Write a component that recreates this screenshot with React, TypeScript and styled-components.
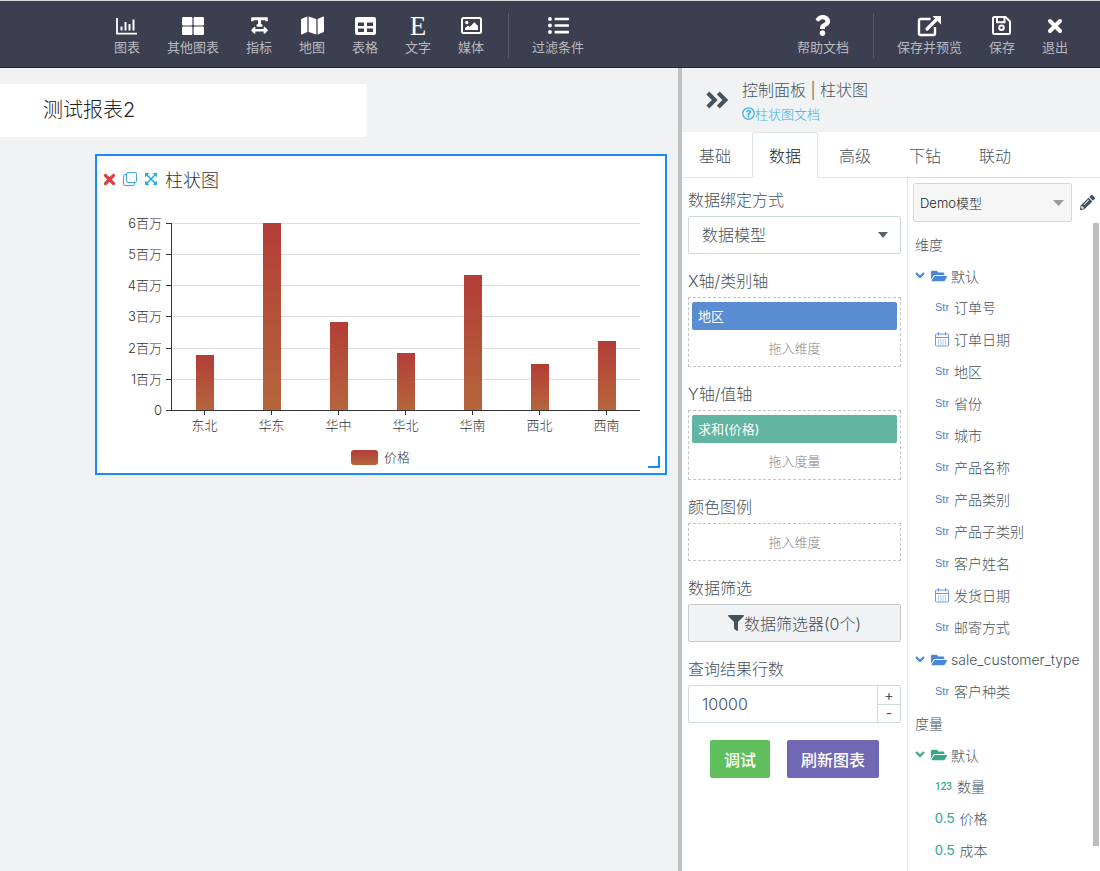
import React from "react";
import styled, { createGlobalStyle } from "styled-components";
import {
  FaTextWidth,
  FaMap,
  FaListUl,
  FaQuestion,
  FaRegQuestionCircle,
  FaFilter,
  FaPencilAlt,
  FaFolderOpen,
} from "react-icons/fa";

const GlobalStyle = createGlobalStyle`
  * { box-sizing: border-box; }
  body {
    margin: 0;
    background: #f0f2f4;
    color: #46525b;
    font-family: Inter, "Noto Sans CJK SC", sans-serif;
    font-weight: 300;
    font-size: 16px;
  }
  button, input, select { font: inherit; color: inherit; }
  button { cursor: pointer; }
`;

const blue = "#4a86d8";
const green = "#35a98a";

const Page = styled.div`
  display: flex;
  flex-direction: column;
  min-height: 100vh;
`;

/* ---------- top toolbar ---------- */

const Toolbar = styled.header`
  display: flex;
  justify-content: space-between;
  height: 68px;
  padding: 3px 18px 0 101px;
  background: #3c3f50;
  border-top: 1px solid #d5d7da;
  border-bottom: 1px solid #1f2540;
`;

const ToolGroup = styled.nav`
  display: flex;
  align-items: center;
`;

const ToolButton = styled.button`
  display: flex;
  flex-direction: column;
  align-items: center;
  padding: 0 14px 0 13px;
  border: 0;
  background: none;
  color: #b9babf;
  font-size: 13px;
  font-weight: 400;
  line-height: 20px;
  white-space: nowrap;
`;

const ToolIcon = styled.span`
  display: flex;
  align-items: center;
  justify-content: center;
  height: 22px;
  color: #fff;
  svg { display: block; }
`;

const SerifLetter = styled.span`
  font-family: "Liberation Serif", serif;
  font-size: 27px;
  line-height: 22px;
`;

const ToolDivider = styled.span`
  width: 1px;
  height: 45px;
  margin: 0 10px;
  background: #5a5c66;
`;

const BarsIcon = () => (
  <svg width="22" height="18" viewBox="0 0 22 18" fill="none" stroke="currentColor">
    <path d="M1 1v15.6h20" strokeWidth="1.8" />
    <path d="M5.500 13.500v-4M9.500 13.500V5M13.500 13.500V7M17.500 13.500V2.500" strokeWidth="2" />
  </svg>
);
const GridIcon = () => (
  <svg width="22" height="18" viewBox="0 0 22 18" fill="currentColor">
    <rect width="10.400" height="8.500" rx="1.200" />
    <rect x="11.600" width="10.400" height="8.500" rx="1.200" />
    <rect y="9.500" width="10.400" height="8.500" rx="1.200" />
    <rect x="11.600" y="9.500" width="10.400" height="8.500" rx="1.200" />
  </svg>
);
const TableIcon = () => (
  <svg width="21" height="18" viewBox="0 0 21 18" fill="currentColor" fillRule="evenodd">
    <path d="M2 0h17a2 2 0 0 1 2 2v14a2 2 0 0 1-2 2H2a2 2 0 0 1-2-2V2a2 2 0 0 1 2-2zM3 5.500v3.500h6V5.500zM12 5.500v3.500h6V5.500zM3 11.500V15h6v-3.500zM12 11.500V15h6v-3.500z" />
  </svg>
);
const PictureIcon = () => (
  <svg width="21" height="17" viewBox="0 0 21 17">
    <rect x="1" y="1" width="19" height="15" rx="1.500" fill="none" stroke="currentColor" strokeWidth="2" />
    <circle cx="5.800" cy="5.500" r="1.700" fill="currentColor" />
    <path d="M4 13v-2l3-2.500 1.800 1.500 4.500-4.700L17 9v4z" fill="currentColor" />
  </svg>
);
const ShareIcon = () => (
  <svg width="24" height="22" viewBox="0 0 24 22" fill="none" stroke="currentColor">
    <path d="M13.500 4H3.500A1.500 1.500 0 0 0 2 5.500v13A1.500 1.500 0 0 0 3.500 20h13a1.500 1.500 0 0 0 1.500-1.500V12" strokeWidth="2.400" />
    <path d="M10 14L20 4" strokeWidth="3.200" strokeLinecap="round" />
    <path d="M15.500 1H24v8.500z" fill="currentColor" stroke="none" />
  </svg>
);
const DiskIcon = () => (
  <svg width="19" height="19" viewBox="0 0 19 19" fill="none" stroke="currentColor" strokeWidth="2">
    <path d="M2.500 1H13.500L18 5.500V16.500A1.500 1.500 0 0 1 16.500 18H2.500A1.500 1.500 0 0 1 1 16.500V2.500A1.500 1.500 0 0 1 2.500 1z" />
    <path d="M5 1.500V6.200H12.500V1.500" />
    <circle cx="9.500" cy="11.800" r="2.300" />
  </svg>
);
const CloseIcon = ({ size }: { size: number }) => (
  <svg width={size} height={size} viewBox="0 0 16 16" fill="none" stroke="currentColor" strokeWidth="4" strokeLinecap="round">
    <path d="M3 3l10 10M13 3L3 13" />
  </svg>
);

/* ---------- report canvas ---------- */

const Main = styled.div`
  display: flex;
  flex: 1;
`;

const Canvas = styled.main`
  flex: 1;
  min-width: 0;
  padding-top: 16px;
`;

const TitleCard = styled.h1`
  width: 367px;
  margin: 0 0 17px;
  padding: 0 43px;
  background: #fff;
  border-radius: 0 3px 3px 0;
  color: #222;
  font-size: 20px;
  font-weight: 300;
  line-height: 53px;
`;

const ChartCard = styled.section`
  position: relative;
  width: 572px;
  margin-left: 95px;
  border: 2px solid #1a8af8;
  background: #fff;
`;

const ChartHeader = styled.div`
  display: flex;
  align-items: center;
  gap: 7px;
  height: 46px;
  margin-bottom: 2px;
  padding-left: 5px;
`;

const ChartTitle = styled.h2`
  margin: 0;
  color: #333;
  font-size: 18px;
  font-weight: 300;
`;

const IconButton = styled.button<{ $color: string }>`
  display: flex;
  align-items: center;
  justify-content: center;
  width: 14px;
  height: 16px;
  padding: 0;
  border: 0;
  background: none;
  color: ${(p) => p.$color};
  svg { flex: none; }
`;

const Plot = styled.svg`
  display: block;
  width: 100%;
  height: auto;
  font-size: 13px;
  fill: #333;
`;

const ResizeHandle = styled.span`
  position: absolute;
  right: 5px;
  bottom: 5px;
  width: 12px;
  height: 12px;
  border: solid #1a8af8;
  border-width: 0 2px 2px 0;
`;

const series = [
  { name: "东北", height: 55 },
  { name: "华东", height: 187 },
  { name: "华中", height: 88 },
  { name: "华北", height: 57 },
  { name: "华南", height: 135 },
  { name: "西北", height: 46 },
  { name: "西南", height: 69 },
];
const levels = ["0", "1百万", "2百万", "3百万", "4百万", "5百万", "6百万"];

const BarChart = () => (
  <Plot viewBox="0 0 568 269" role="img" aria-label="柱状图">
    <defs>
      <linearGradient id="bar" x1="0" y1="0" x2="0" y2="1">
        <stop offset="0" stopColor="#b33d37" />
        <stop offset="1" stopColor="#b5663c" />
      </linearGradient>
    </defs>
    {levels.map((label, i) => {
      const y = Math.round(206 - i * 31.2) + 0.5;
      return (
        <g key={label}>
          {i > 0 && <path d={`M75 ${y}H543`} stroke="#dcdcdc" />}
          <path d={`M69 ${y}h6`} stroke="#333" />
          <text x="65" y={y + 4} textAnchor="end">{label}</text>
        </g>
      );
    })}
    {series.map((s, i) => (
      <g key={s.name}>
        <rect x={99 + i * 67} y={206 - s.height} width="18" height={s.height} fill="url(#bar)" />
        <path d={`M${107.5 + i * 67} 207v4`} stroke="#333" />
        <text x={107.5 + i * 67} y="226" textAnchor="middle">{s.name}</text>
      </g>
    ))}
    <path d="M74.500 19V206.500H543" fill="none" stroke="#333" />
    <rect x="254" y="246" width="27" height="15" rx="3" fill="url(#bar)" />
    <text x="287" y="258">价格</text>
  </Plot>
);

/* ---------- control panel ---------- */

const Panel = styled.aside`
  display: flex;
  flex-direction: column;
  width: 422px;
  border-left: 4px solid #bfc0c2;
  background: #fff;
`;

const PanelHeader = styled.div`
  display: flex;
  align-items: center;
  gap: 14px;
  height: 64px;
  padding-left: 24px;
  background: #f0f2f4;
`;

const PanelTitle = styled.h2`
  margin: 0;
  font-size: 16px;
  font-weight: 300;
  line-height: 24px;
`;

const DocLink = styled.a`
  display: flex;
  align-items: center;
  color: #38aee6;
  font-size: 13px;
  line-height: 24px;
  text-decoration: none;
`;

const PanelHeading = styled.div`
  padding-top: 3px;
`;

const CollapseButton = styled.button`
  display: flex;
  padding: 0;
  border: 0;
  background: none;
`;

const Tabs = styled.nav`
  display: flex;
  gap: 4px;
  height: 46px;
  border-bottom: 1px solid #dee3e6;
`;

const Tab = styled.button<{ $active?: boolean }>`
  height: 46px;
  padding: 0 16px;
  border: 1px solid ${(p) => (p.$active ? "#dee3e6" : "transparent")};
  border-bottom-color: ${(p) => (p.$active ? "#fff" : "transparent")};
  border-radius: 3px 3px 0 0;
  background: none;
  color: ${(p) => (p.$active ? "#222" : "inherit")};
`;

const PanelBody = styled.div`
  display: flex;
  flex: 1;
`;

const Form = styled.form`
  display: flex;
  flex-direction: column;
  gap: 15px;
  width: 226px;
  padding: 10px 6px 0;
  border-right: 1px solid #e2e6e9;
`;

const Field = styled.div`
  display: flex;
  flex-direction: column;
  gap: 4px;
`;

const FieldLabel = styled.label`
  line-height: 24px;
`;

const SelectBox = styled.div<{ $muted?: boolean }>`
  position: relative;
  flex: 1;
  select {
    display: block;
    width: 100%;
    height: ${(p) => (p.$muted ? 39 : 38)}px;
    padding: 0 ${(p) => (p.$muted ? 6 : 13)}px;
    border: 1px solid #cfdadd;
    border-radius: 2px;
    background: ${(p) => (p.$muted ? "#f6f6f6" : "#fff")};
    color: ${(p) => (p.$muted ? "#222" : "inherit")};
    font-size: ${(p) => (p.$muted ? 13 : 16)}px;
    appearance: none;
  }
  svg {
    position: absolute;
    top: 50%;
    right: ${(p) => (p.$muted ? 8 : 13)}px;
    margin-top: -3px;
    color: ${(p) => (p.$muted ? "#999" : "#56626b")};
    pointer-events: none;
  }
`;

const Caret = ({ width }: { width: number }) => (
  <svg width={width} height="6" viewBox="0 0 10 6" preserveAspectRatio="none" fill="currentColor">
    <path d="M0 0h10L5 6z" />
  </svg>
);

const DropZone = styled.div`
  padding: 0 3px;
  border: 1px dashed #c4c4c4;
`;

const Pill = styled.div<{ $color: string }>`
  margin-top: 4px;
  padding: 0 6px;
  border-radius: 2px;
  background: ${(p) => p.$color};
  color: #fff;
  font-size: 13px;
  font-weight: 400;
  line-height: 28px;
`;

const Hint = styled.div`
  color: #858585;
  font-size: 13px;
  line-height: 36px;
  text-align: center;
`;

const FilterButton = styled.button`
  display: flex;
  align-items: center;
  justify-content: center;
  height: 38px;
  border: 1px solid #c6cacc;
  border-radius: 2px;
  background: #f0f2f4;
`;

const Stepper = styled.div`
  display: flex;
  height: 38px;
  border: 1px solid #cfdadd;
  border-radius: 2px;
  input {
    flex: 1;
    min-width: 0;
    padding: 0 13px;
    border: 0;
    background: none;
  }
`;

const StepButtons = styled.div`
  display: flex;
  flex-direction: column;
  width: 23px;
  border-left: 1px solid #cfdadd;
  button {
    flex: 1;
    padding: 0;
    border: 0;
    background: none;
    font-size: 14px;
    font-weight: 400;
    line-height: 16px;
  }
  button + button { border-top: 1px solid #cfdadd; }
`;

const Actions = styled.div`
  display: flex;
  justify-content: center;
  gap: 17px;
  padding-top: 2px;
`;

const ActionButton = styled.button<{ $color: string }>`
  height: 38px;
  padding: 0 14px;
  border: 0;
  border-radius: 2px;
  background: ${(p) => p.$color};
  color: #fff;
  font-weight: 500;
`;

/* ---------- model fields ---------- */

const ModelColumn = styled.div`
  display: flex;
  flex: 1;
  flex-direction: column;
  min-width: 0;
`;

const ModelBar = styled.div`
  display: flex;
  align-items: center;
  gap: 8px;
  padding: 5px 5px 0 5px;
`;

const ListArea = styled.div`
  display: flex;
  flex: 1;
  justify-content: space-between;
  padding-right: 1px;
`;

const FieldTree = styled.div`
  padding: 7px 0 0 7px;
  font-size: 14px;
  white-space: nowrap;
`;

const TreeGroup = styled.section`
  margin-bottom: 1px;
`;

const TreeHeading = styled.h3`
  margin: 0;
  font-size: 14px;
  font-weight: 300;
  line-height: 31px;
`;

const FolderRow = styled.div<{ $color: string }>`
  display: flex;
  align-items: center;
  height: 31px;
  svg { color: ${(p) => p.$color}; }
  svg + svg { margin: 0 4px 0 6px; }
`;

const FieldRow = styled.div`
  display: flex;
  align-items: center;
  gap: 5px;
  height: 32px;
  padding-left: 20px;
`;

const tagSizes: Record<string, number> = { str: 11, date: 11, int: 10, float: 14 };

const TypeTag = styled.span<{ $kind: string }>`
  display: flex;
  color: ${(p) => (p.$kind === "str" || p.$kind === "date" ? blue : green)};
  font-family: ${(p) => (p.$kind === "int" ? "Roboto" : '"Liberation Sans"')}, sans-serif;
  font-size: ${(p) => tagSizes[p.$kind]}px;
  font-weight: ${(p) => (p.$kind === "int" ? 500 : 400)};
`;

const ScrollThumb = styled.div`
  width: 6px;
  height: 96%;
  margin-top: 1px;
  background: #bdbdbd;
`;

const CalendarIcon = () => (
  <svg width="14" height="15" viewBox="0 0 14 15" fill="none" stroke="#6f96dc">
    <rect x=".5" y="2" width="13" height="12" rx="1" />
    <path d="M.5 5.500h13M3.500 0v3.500M10.500 0v3.500" />
    <path d="M3 8h8.500M3 10h8.500M3 12h8.500" strokeDasharray="1 1.300" />
  </svg>
);

const Folder = ({ name, color }: { name: string; color: string }) => (
  <FolderRow $color={color}>
    <svg width="10" height="7" viewBox="0 0 10 7" fill="none" stroke="currentColor" strokeWidth="2.200">
      <path d="M1 1l4 4 4-4" />
    </svg>
    <FaFolderOpen size={16} />
    {name}
  </FolderRow>
);

type FieldItem = [kind: string, name: string];

const Fields = ({ items }: { items: FieldItem[] }) => (
  <>
    {items.map(([kind, name]) => (
      <FieldRow key={name}>
        <TypeTag $kind={kind}>
          {kind === "str" && "Str"}
          {kind === "date" && <CalendarIcon />}
          {kind === "int" && "123"}
          {kind === "float" && "0.5"}
        </TypeTag>
        {name}
      </FieldRow>
    ))}
  </>
);

const dimensions: FieldItem[] = [
  ["str", "订单号"],
  ["date", "订单日期"],
  ["str", "地区"],
  ["str", "省份"],
  ["str", "城市"],
  ["str", "产品名称"],
  ["str", "产品类别"],
  ["str", "产品子类别"],
  ["str", "客户姓名"],
  ["date", "发货日期"],
  ["str", "邮寄方式"],
];
const measures: FieldItem[] = [
  ["int", "数量"],
  ["float", "价格"],
  ["float", "成本"],
];

const Tool = ({ label, children }: { label: string; children: React.ReactNode }) => (
  <ToolButton type="button">
    <ToolIcon>{children}</ToolIcon>
    {label}
  </ToolButton>
);

export default function App() {
  return (
    <Page>
      <GlobalStyle />
      <Toolbar>
        <ToolGroup>
          <Tool label="图表"><BarsIcon /></Tool>
          <Tool label="其他图表"><GridIcon /></Tool>
          <Tool label="指标"><FaTextWidth size={19} /></Tool>
          <Tool label="地图"><FaMap size={23} /></Tool>
          <Tool label="表格"><TableIcon /></Tool>
          <Tool label="文字"><SerifLetter>E</SerifLetter></Tool>
          <Tool label="媒体"><PictureIcon /></Tool>
          <ToolDivider />
          <Tool label="过滤条件"><FaListUl size={21} /></Tool>
        </ToolGroup>
        <ToolGroup>
          <Tool label="帮助文档"><FaQuestion size={21} /></Tool>
          <ToolDivider />
          <Tool label="保存并预览"><ShareIcon /></Tool>
          <Tool label="保存"><DiskIcon /></Tool>
          <Tool label="退出"><CloseIcon size={16} /></Tool>
        </ToolGroup>
      </Toolbar>

      <Main>
        <Canvas>
          <TitleCard>测试报表2</TitleCard>
          <ChartCard>
            <ChartHeader>
              <IconButton type="button" aria-label="删除" $color="#d9413f"><CloseIcon size={13} /></IconButton>
              <IconButton type="button" aria-label="复制" $color="#3fa9e0">
                <svg width="14" height="14" viewBox="0 0 14 14" fill="none" stroke="currentColor">
                  <rect x="3.500" y=".5" width="10" height="10" rx="1.500" />
                  <path d="M3.500 2.500h-1.500a1.500 1.500 0 0 0-1.500 1.500v8a1.500 1.500 0 0 0 1.500 1.500h8a1.500 1.500 0 0 0 1.500-1.500v-1.500" />
                </svg>
              </IconButton>
              <IconButton type="button" aria-label="放大" $color="#1fa9e6">
                <svg width="12" height="12" viewBox="0 0 12 12" fill="currentColor">
                  <path d="M1.500 1.500l9 9M10.500 1.500l-9 9" stroke="currentColor" strokeWidth="1.500" />
                  <path d="M0 0h4.300L0 4.300zM12 0v4.300L7.700 0zM0 12V7.700L4.300 12zM12 12H7.700L12 7.700z" />
                </svg>
              </IconButton>
              <ChartTitle>柱状图</ChartTitle>
            </ChartHeader>
            <BarChart />
            <ResizeHandle />
          </ChartCard>
        </Canvas>

        <Panel>
          <PanelHeader>
            <CollapseButton type="button" aria-label="收起">
              <svg width="22" height="18" viewBox="0 0 22 18" fill="none" stroke="currentColor" strokeWidth="4">
                <path d="M1.800 2L8.800 9l-7 7M12.300 2l7 7-7 7" />
              </svg>
            </CollapseButton>
            <PanelHeading>
              <PanelTitle>控制面板 | 柱状图</PanelTitle>
              <DocLink href="#doc"><FaRegQuestionCircle size={13} />柱状图文档</DocLink>
            </PanelHeading>
          </PanelHeader>
          <Tabs>
            <Tab type="button">基础</Tab>
            <Tab type="button" $active>数据</Tab>
            <Tab type="button">高级</Tab>
            <Tab type="button">下钻</Tab>
            <Tab type="button">联动</Tab>
          </Tabs>
          <PanelBody>
            <Form>
              <Field>
                <FieldLabel htmlFor="binding">数据绑定方式</FieldLabel>
                <SelectBox>
                  <select id="binding"><option>数据模型</option></select>
                  <Caret width={10} />
                </SelectBox>
              </Field>
              <Field>
                <FieldLabel as="div">X轴/类别轴</FieldLabel>
                <DropZone>
                  <Pill $color="#5a8cd2">地区</Pill>
                  <Hint>拖入维度</Hint>
                </DropZone>
              </Field>
              <Field>
                <FieldLabel as="div">Y轴/值轴</FieldLabel>
                <DropZone>
                  <Pill $color="#62b5a1">求和(价格)</Pill>
                  <Hint>拖入度量</Hint>
                </DropZone>
              </Field>
              <Field>
                <FieldLabel as="div">颜色图例</FieldLabel>
                <DropZone><Hint>拖入维度</Hint></DropZone>
              </Field>
              <Field>
                <FieldLabel as="div">数据筛选</FieldLabel>
                <FilterButton type="button"><FaFilter size={16} />数据筛选器(0个)</FilterButton>
              </Field>
              <Field>
                <FieldLabel htmlFor="rows">查询结果行数</FieldLabel>
                <Stepper>
                  <input id="rows" type="text" defaultValue="10000" />
                  <StepButtons>
                    <button type="button">+</button>
                    <button type="button">-</button>
                  </StepButtons>
                </Stepper>
              </Field>
              <Actions>
                <ActionButton type="button" $color="#5fbf5c">调试</ActionButton>
                <ActionButton type="button" $color="#7067b5">刷新图表</ActionButton>
              </Actions>
            </Form>
            <ModelColumn>
              <ModelBar>
                <SelectBox $muted>
                  <select aria-label="模型"><option>Demo模型</option></select>
                  <Caret width={11} />
                </SelectBox>
                <FaPencilAlt size={15} />
              </ModelBar>
              <ListArea>
                <FieldTree>
                  <TreeHeading>维度</TreeHeading>
                  <TreeGroup>
                    <Folder name="默认" color={blue} />
                    <Fields items={dimensions} />
                  </TreeGroup>
                  <TreeGroup>
                    <Folder name="sale_customer_type" color={blue} />
                    <Fields items={[["str", "客户种类"]]} />
                  </TreeGroup>
                  <TreeHeading>度量</TreeHeading>
                  <Folder name="默认" color={green} />
                  <Fields items={measures} />
                </FieldTree>
                <ScrollThumb />
              </ListArea>
            </ModelColumn>
          </PanelBody>
        </Panel>
      </Main>
    </Page>
  );
}
